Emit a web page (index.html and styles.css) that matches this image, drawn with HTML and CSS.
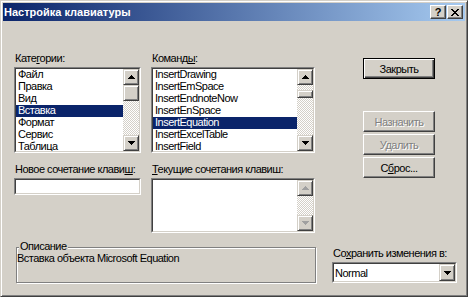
FILE: index.html
```html
<!DOCTYPE html>
<html lang="ru">
<head>
    <meta charset="UTF-8">
    <title>Настройка клавиатуры</title>
    <link rel="stylesheet" href="styles.css">
</head>
<body>
    <div class="window">
        <!-- Title bar -->
        <div class="titlebar">
            <span class="title">Настройка клавиатуры</span>
            <div class="caption-buttons">
                <span class="cap-btn help">?</span>
                <span class="cap-btn">
                    <svg width="8" height="7" shape-rendering="crispEdges"><path d="M0 0h2v1H0zM6 0h2v1H6zM1 1h2v1H1zM5 1h2v1H5zM2 2h4v1H2zM3 3h2v1H3zM2 4h4v1H2zM1 5h2v1H1zM5 5h2v1H5zM0 6h2v1H0zM6 6h2v1H6z"/></svg>
                </span>
            </div>
        </div>

        <div class="dialog">
            <div class="top">
                <div class="fields">
                    <!-- Categories -->
                    <div class="label">Кате<u>г</u>ории:</div>
                    <!-- Commands -->
                    <div class="label">Команд<u>ы</u>:</div>

                    <div class="sunken listbox">
                        <div class="inner">
                            <ul class="items">
                                <li>Файл</li>
                                <li>Правка</li>
                                <li>Вид</li>
                                <li class="selected">Вставка</li>
                                <li>Формат</li>
                                <li>Сервис</li>
                                <li>Таблица</li>
                            </ul>
                            <div class="scrollbar">
                                <div class="sb-btn"><svg width="7" height="4" shape-rendering="crispEdges"><path d="M3 0h1v1h1v1h1v1h1v1H0V3h1V2h1V1h1z"/></svg></div>
                                <div class="sb-track"><div class="sb-thumb cat-thumb"></div></div>
                                <div class="sb-btn"><svg width="7" height="4" shape-rendering="crispEdges"><path d="M0 0h7v1H6v1H5v1H4v1H3V3H2V2H1V1H0z"/></svg></div>
                            </div>
                        </div>
                    </div>

                    <div class="sunken listbox">
                        <div class="inner">
                            <ul class="items">
                                <li>InsertDrawing</li>
                                <li>InsertEmSpace</li>
                                <li>InsertEndnoteNow</li>
                                <li>InsertEnSpace</li>
                                <li class="selected">InsertEquation</li>
                                <li>InsertExcelTable</li>
                                <li>InsertField</li>
                            </ul>
                            <div class="scrollbar">
                                <div class="sb-btn"><svg width="7" height="4" shape-rendering="crispEdges"><path d="M3 0h1v1h1v1h1v1h1v1H0V3h1V2h1V1h1z"/></svg></div>
                                <div class="sb-track"><div class="sb-thumb cmd-thumb"></div></div>
                                <div class="sb-btn"><svg width="7" height="4" shape-rendering="crispEdges"><path d="M0 0h7v1H6v1H5v1H4v1H3V3H2V2H1V1H0z"/></svg></div>
                            </div>
                        </div>
                    </div>

                    <div class="label second">Новое сочетание клави<u>ш</u>:</div>
                    <div class="label second"><u>Т</u>екущие сочетания клавиш:</div>

                    <div class="sunken textbox">
                        <div class="inner"></div>
                    </div>

                    <div class="sunken keysbox">
                        <div class="inner">
                            <div class="items"></div>
                            <div class="scrollbar">
                                <div class="sb-btn disabled"><svg width="7" height="4" shape-rendering="crispEdges"><path d="M3 0h1v1h1v1h1v1h1v1H0V3h1V2h1V1h1z"/></svg></div>
                                <div class="sb-track"></div>
                                <div class="sb-btn disabled"><svg width="7" height="4" shape-rendering="crispEdges"><path d="M0 0h7v1H6v1H5v1H4v1H3V3H2V2H1V1H0z"/></svg></div>
                            </div>
                        </div>
                    </div>
                </div>

                <!-- Buttons -->
                <div class="buttons">
                    <div class="btn default">Закрыть</div>
                    <div class="btn disabled first-group">Назначить</div>
                    <div class="btn disabled">Удалить</div>
                    <div class="btn">С<u>б</u>рос...</div>
                </div>
            </div>

            <div class="bottom">
                <div class="group">
                    <span class="group-title">Описание</span>
                    <div class="group-text">Вставка объекта Microsoft Equation</div>
                </div>
                <div class="save">
                    <div class="label">Со<u>х</u>ранить изменения в:</div>
                    <div class="sunken combo">
                        <div class="inner">
                            <span class="combo-value">Normal</span>
                            <div class="sb-btn"><svg width="7" height="4" shape-rendering="crispEdges"><path d="M0 0h7v1H6v1H5v1H4v1H3V3H2V2H1V1H0z"/></svg></div>
                        </div>
                    </div>
                </div>
            </div>
        </div>
    </div>
</body>
</html>
```

FILE: styles.css
```css
* {
    box-sizing: border-box;
}

body {
    margin: 0;
    background: #d4d0c8;
    font-family: "Liberation Sans", Arial, sans-serif;
    font-size: 11px;
    letter-spacing: -0.5px;
    color: #000;
}

u {
    text-decoration: underline;
    text-underline-offset: 1px;
}

/* Window frame */
.window {
    width: 468px;
    height: 297px;
    background: #d4d0c8;
    border: 1px solid;
    border-color: #d4d0c8 #404040 #404040 #d4d0c8;
    box-shadow: inset 1px 1px #fff, inset -1px -1px #808080;
    padding: 2px;
    display: flex;
    flex-direction: column;
}

.titlebar {
    height: 18px;
    background: linear-gradient(to right, #0a246a, #a6caf0);
    display: flex;
    align-items: center;
    justify-content: space-between;
    padding: 0 2px 0 1px;
}

.title {
    color: #fff;
    font-weight: bold;
    letter-spacing: 0;
}

.caption-buttons {
    display: flex;
    gap: 1px;
}

.cap-btn {
    width: 16px;
    height: 14px;
    background: #d4d0c8;
    border: 1px solid;
    border-color: #fff #404040 #404040 #fff;
    box-shadow: inset -1px -1px #808080;
    display: flex;
    align-items: center;
    justify-content: center;
}

.cap-btn.help {
    font-weight: bold;
    font-size: 11px;
    letter-spacing: 0;
    line-height: 12px;
}

/* Dialog body */
.dialog {
    flex: 1;
    padding: 31px 0 0 11px;
}

.top {
    display: flex;
    align-items: flex-start;
}

.fields {
    display: grid;
    grid-template-columns: 127px 164px;
    column-gap: 10px;
    align-items: start;
}

.label {
    height: 13px;
    line-height: 13px;
    padding-left: 1px;
    white-space: nowrap;
}

.label.second {
    margin-top: 10px;
}

/* Sunken fields */
.sunken {
    border: 1px solid;
    border-color: #808080 #fff #fff #808080;
}

.sunken > .inner {
    height: 100%;
    border: 1px solid;
    border-color: #404040 #d4d0c8 #d4d0c8 #404040;
    background: #fff;
    display: flex;
}

.listbox {
    height: 86px;
    margin-top: 2px;
}

.textbox {
    height: 17px;
    margin-top: 2px;
}

.keysbox {
    height: 55px;
    margin-top: 2px;
}

.items {
    flex: 1;
    margin: 0;
    padding: 0;
    list-style: none;
    overflow: hidden;
}

.items li {
    height: 12px;
    line-height: 11px;
    padding-left: 2px;
    white-space: nowrap;
}

.items li.selected {
    background: #0a246a;
    color: #fff;
}

/* Scrollbars */
.scrollbar {
    width: 16px;
    display: flex;
    flex-direction: column;
}

.sb-btn {
    width: 16px;
    height: 16px;
    flex: none;
    background: #d4d0c8;
    border: 1px solid;
    border-color: #d4d0c8 #404040 #404040 #d4d0c8;
    box-shadow: inset 1px 1px #fff, inset -1px -1px #808080;
    display: flex;
    align-items: center;
    justify-content: center;
}

.sb-btn.disabled svg {
    fill: #a0a0a0;
}

.sb-track {
    flex: 1;
    background: repeating-conic-gradient(#fff 0 25%, #d4d0c8 0 50%) 0 0 / 2px 2px;
}

.sb-thumb {
    background: #d4d0c8;
    border: 1px solid;
    border-color: #d4d0c8 #404040 #404040 #d4d0c8;
    box-shadow: inset 1px 1px #fff, inset -1px -1px #808080;
}

.cat-thumb {
    height: 16px;
}

.cmd-thumb {
    height: 8px;
    margin-top: 5px;
}

/* Push buttons */
.buttons {
    margin-left: 48px;
    margin-top: 6px;
    display: flex;
    flex-direction: column;
    gap: 2px;
}

.btn {
    width: 72px;
    height: 21px;
    background: #d4d0c8;
    border: 1px solid;
    border-color: #fff #404040 #404040 #fff;
    box-shadow: inset -1px -1px #808080;
    display: flex;
    align-items: center;
    justify-content: center;
}

.btn.default {
    border: 1px solid #000;
    box-shadow: inset 1px 1px #fff, inset -1px -1px #404040, inset -2px -2px #808080;
}

.btn.disabled {
    color: #808080;
    text-shadow: 1px 1px 0 #fff;
}

.btn.first-group {
    margin-top: 30px;
}

/* Bottom row */
.bottom {
    display: flex;
    align-items: flex-start;
    margin-top: 14px;
}

.group {
    width: 300px;
    height: 36px;
    margin-left: 2px;
    border: 1px solid #808080;
    box-shadow: 1px 1px 0 #fff, inset 1px 1px 0 #fff;
}

.group-title {
    display: block;
    width: fit-content;
    height: 11px;
    margin: -7px 0 0 2px;
    padding: 0 1px;
    background: #d4d0c8;
    line-height: 11px;
}

.group-text {
    line-height: 12px;
}

.save {
    margin-left: 16px;
}

.combo {
    width: 125px;
    height: 21px;
    margin-top: 2px;
}

.combo .inner {
    align-items: center;
    justify-content: space-between;
}

.combo-value {
    padding-left: 1px;
}

.combo .sb-btn {
    height: 17px;
}
```
